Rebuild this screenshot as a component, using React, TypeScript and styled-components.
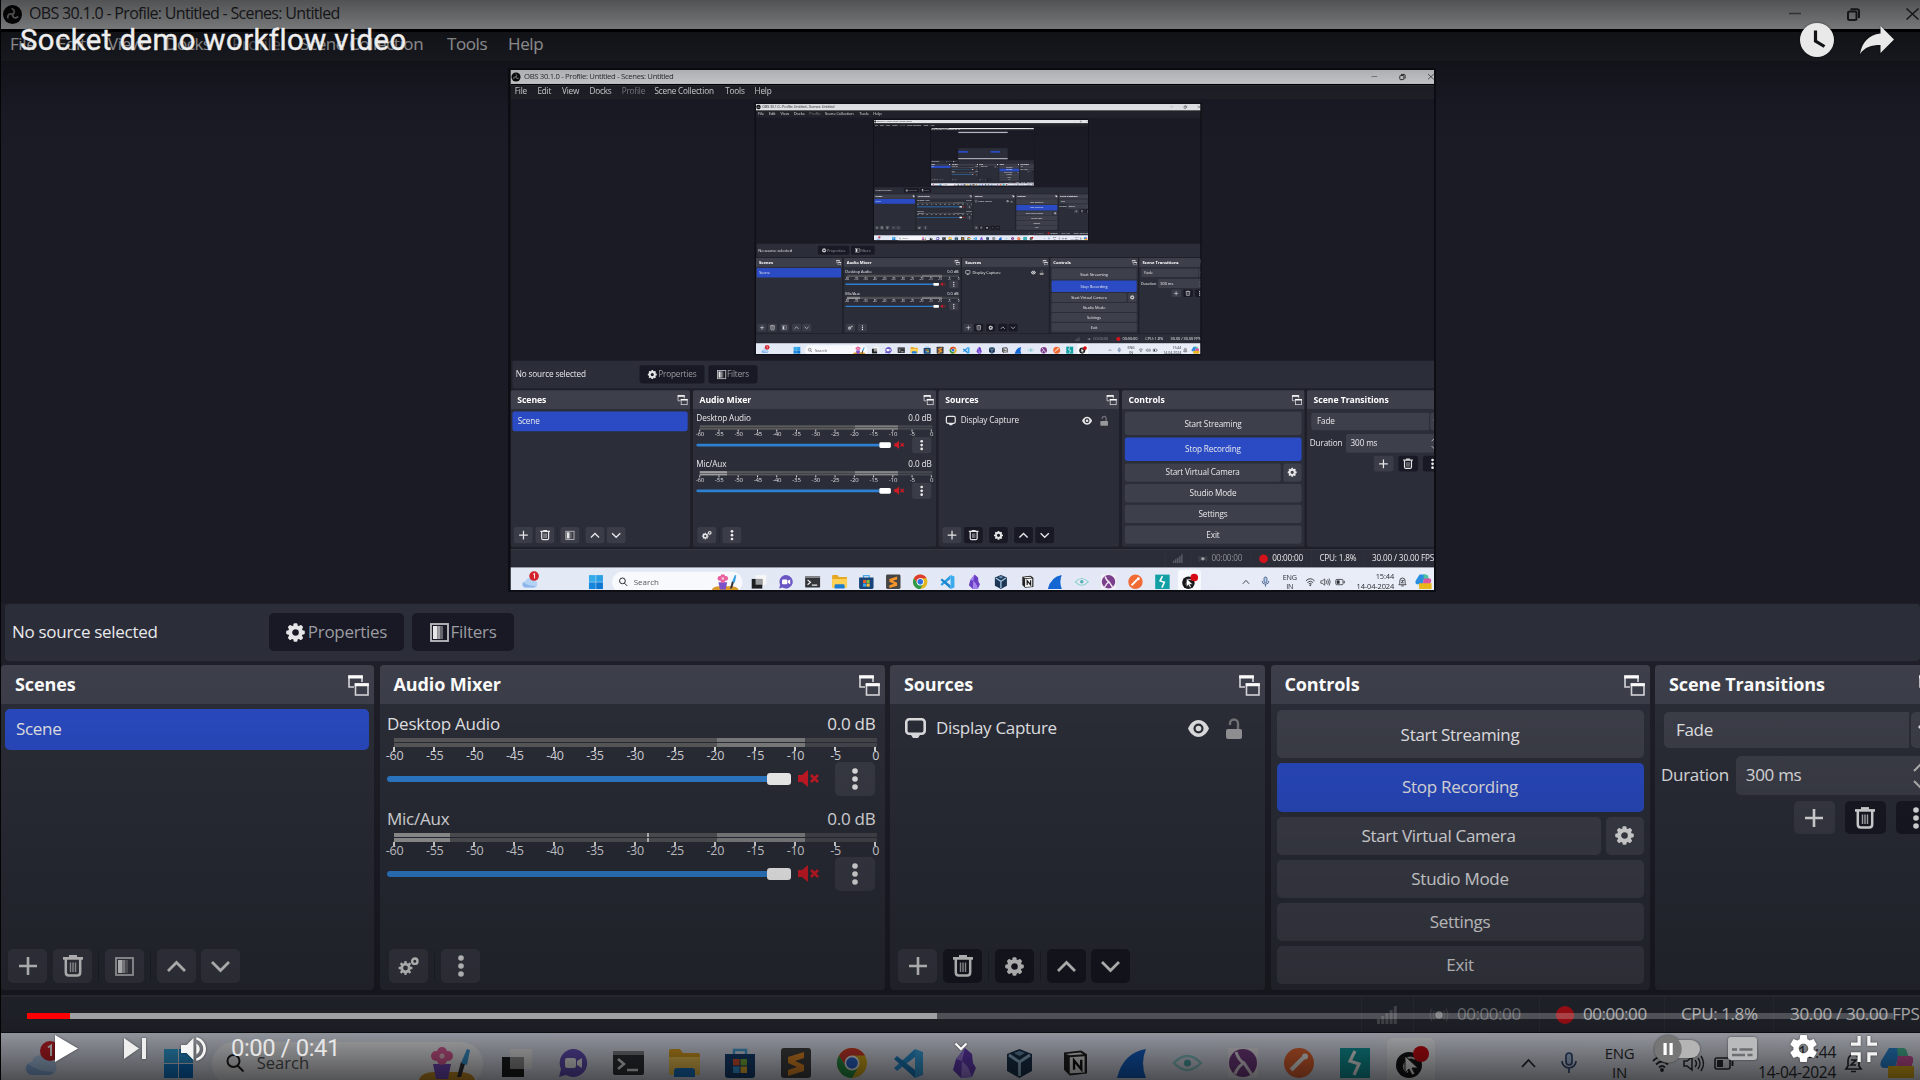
import React from "react";
import styled, { createGlobalStyle } from "styled-components";

const SCALE = 0.4815;
const TEXT_DEPTH = 4;

const GlobalStyle = createGlobalStyle`
  html, body { margin: 0; padding: 0; background: #000; }
  body { width: 1920px; height: 1080px; overflow: hidden; }
  * { box-sizing: border-box; }
  svg { display: block; flex: none; overflow: visible; }
`;

const ui = `"Open Sans", "Noto Sans", sans-serif`;

/* ---------- desktop frame ---------- */

const Desktop = styled.div`
  width: 1920px;
  height: 1080px;
  overflow: hidden;
  display: flex;
  flex-direction: column;
  background: #1e1f28;
  border-left: 1px solid #050507;
  font-family: ${ui};
  color: #e9e9ec;
`;

const TitleBar = styled.div`
  flex: none;
  height: 32px;
  display: flex;
  align-items: center;
  padding: 0 1px 1px 2px;
  background: #eff1f4;
  border-bottom: 3px solid #000;
`;

const Text = styled.span<{ $size?: number; $color?: string; $weight?: number; $ls?: number; $font?: string }>`
  font-family: ${(p) => p.$font ?? ui};
  font-size: ${(p) => p.$size ?? 17}px;
  font-weight: ${(p) => p.$weight ?? 400};
  color: ${(p) => p.$color ?? "#e9e9ec"};
  letter-spacing: ${(p) => p.$ls ?? -0.3}px;
  line-height: 1.2;
  white-space: nowrap;
`;

const TitleText = styled(Text)`
  margin-left: 7px;
`;

const WindowButtons = styled.div`
  margin-left: auto;
  display: flex;
  align-items: center;
  gap: 46px;
`;

const MenuBar = styled.div`
  flex: none;
  height: 29px;
  display: grid;
  grid-template-columns: 47px 51px 57px 67px 68px 147px 61px 60px;
  align-items: center;
  padding: 0 0 4px 9px;
  background: #22242c;
`;

const PreviewArea = styled.div`
  flex: none;
  height: 542px;
  padding: 9px 0 0 509px;
  background: #1b1b26;
`;

const PreviewFrame = styled.div`
  width: ${1920 * SCALE}px;
  height: ${1080 * SCALE}px;
  overflow: hidden;
  box-shadow: 0 0 0 2px #0d0d14;
`;

const Scaler = styled.div`
  width: 1920px;
  height: 1080px;
  transform: scale(${SCALE});
  transform-origin: 0 0;
`;

/* ---------- source toolbar ---------- */

const SourceBar = styled.div`
  flex: none;
  height: 57px;
  margin: 1px 0 4px 4px;
  padding: 0 0 1px 7px;
  display: flex;
  align-items: center;
  border-radius: 4px;
  background: #2b2d38;
`;

const SourceName = styled.div`
  width: 257px;
`;

const SourceButton = styled.div<{ $width: number; $gap: number }>`
  width: ${(p) => p.$width}px;
  height: 38px;
  margin-right: 8px;
  display: flex;
  align-items: center;
  justify-content: center;
  gap: ${(p) => p.$gap}px;
  border-radius: 5px;
  background: #181924;
`;

/* ---------- docks ---------- */

const Docks = styled.div`
  flex: none;
  height: 325px;
  display: flex;
  gap: 5.5px;
`;

const Dock = styled.div<{ $width: number }>`
  flex: none;
  width: ${(p) => p.$width}px;
  display: flex;
  flex-direction: column;
  border-radius: 4px;
  background: #2b2e38;
  overflow: hidden;
`;

const DockHeader = styled.div`
  flex: none;
  height: 39px;
  padding: 1px 5px 0 14px;
  display: flex;
  align-items: center;
  justify-content: space-between;
  background: #3d3f4b;
`;

const DockBody = styled.div<{ $pad: string }>`
  flex: 1;
  display: flex;
  flex-direction: column;
  padding: ${(p) => p.$pad};
`;

const SceneRow = styled.div`
  height: 41px;
  padding: 0 0 1px 11px;
  display: flex;
  align-items: center;
  border-radius: 5px;
  background: #2a4bc4;
`;

const DockFooter = styled.div`
  margin-top: auto;
  display: flex;
  align-items: center;
`;

const Separator = styled.div`
  width: 1px;
  height: 30px;
  margin: 0 6px;
  background: #22242d;
`;

const ToolButton = styled.div<{ $dark?: boolean; $mr?: number; $w?: number; $h?: number }>`
  flex: none;
  width: ${(p) => p.$w ?? 39}px;
  height: ${(p) => p.$h ?? 34}px;
  margin-right: ${(p) => p.$mr ?? 0}px;
  display: flex;
  align-items: center;
  justify-content: center;
  border-radius: 5px;
  background: ${(p) => (p.$dark ? "#181924" : "#3a3c47")};
`;

/* ---------- audio mixer ---------- */

const Channel = styled.div`
  height: 95px;
  display: flex;
  flex-direction: column;
`;

const ChannelHead = styled.div`
  height: 28px;
  padding: 2px 1px 0 0;
  display: flex;
  align-items: center;
  justify-content: space-between;
`;

const Meter = styled.div`
  height: 9px;
  margin: 1px 0 0 7px;
  width: 483px;
  display: flex;
  flex-direction: column;
  gap: 1px;
`;

const MeterStrip = styled.div<{ $live?: boolean }>`
  height: 4px;
  background: ${(p) =>
    p.$live
      ? "linear-gradient(90deg,#9d9d9d 0 56px,#55565a 56px 253px,#c4c4c4 253px 255px,#55565a 255px 323px,#858688 323px 411px,#46484f 411px)"
      : "linear-gradient(90deg,#5b5b5c 0 323px,#7f8080 323px 411px,#46484f 411px)"};
`;

const Scale = styled.div`
  height: 24px;
  margin-left: -13px;
  display: grid;
  grid-template-columns: repeat(13, 40.1px);
`;

const Tick = styled.div`
  display: flex;
  flex-direction: column;
  align-items: center;
  color: #dedee0;
  font-size: 12.5px;
  line-height: 9px;
  letter-spacing: -0.3px;
  text-indent: 1px;
  &::before {
    content: "";
    width: 2px;
    height: 4px;
    background: #dedee0;
  }
`;

const VolumeRow = styled.div`
  height: 33px;
  margin-top: -9px;
  display: flex;
  align-items: center;
`;

const Track = styled.div`
  width: 380px;
  height: 6px;
  border-radius: 3px 0 0 3px;
  background: #2f80d2;
`;

const Handle = styled.div`
  width: 24px;
  height: 12px;
  margin-right: 7px;
  border-radius: 3px;
  background: #fff;
`;

/* ---------- sources / controls / transitions ---------- */

const SourceRow = styled.div`
  display: flex;
  align-items: center;
  height: 34px;
`;

const ControlRow = styled.div`
  display: flex;
  gap: 5px;
  margin-bottom: 5.3px;
`;

const ControlButton = styled.div<{ $h: number; $w?: number; $active?: boolean }>`
  width: ${(p) => p.$w ?? 367}px;
  height: ${(p) => p.$h}px;
  padding-top: ${(p) => (p.$h === 48 ? 2 : 0)}px;
  display: flex;
  align-items: center;
  justify-content: center;
  border-radius: 5px;
  background: ${(p) => (p.$active ? "#2a4bc4" : "#3d3f4a")};
`;

const Combo = styled.div`
  display: flex;
  gap: 2px;
  height: 36px;
  margin-left: 9px;
`;

const ComboPart = styled.div<{ $w: number; $pl: number }>`
  width: ${(p) => p.$w}px;
  padding-left: ${(p) => p.$pl}px;
  display: flex;
  align-items: center;
  border-radius: 5px 0 0 5px;
  background: #3d3f4a;
`;

const DurationRow = styled.div`
  display: flex;
  align-items: center;
  height: 39px;
  margin-top: 8px;
  padding-left: 6px;
`;

const SpinBox = styled.div`
  width: 195px;
  height: 39px;
  margin-left: 7px;
  padding-left: 10px;
  display: flex;
  align-items: center;
  border-radius: 5px;
  background: #3d3f4a;
`;

const TransitionTools = styled.div`
  display: flex;
  gap: 10.5px;
  margin: 6px 0 0 139px;
`;

/* ---------- status bar ---------- */

const StatusBar = styled.div`
  flex: none;
  height: 38px;
  margin-top: 5px;
  display: flex;
  align-items: center;
  justify-content: flex-end;
  background: #2b2e38;
  border-top: 2px solid #343743;
  border-bottom: 1px solid #15161c;
`;

const StatusCell = styled.div<{ $w: number; $pl: number; $gap?: number }>`
  flex: none;
  width: ${(p) => p.$w}px;
  height: 100%;
  padding-left: ${(p) => p.$pl}px;
  display: flex;
  align-items: center;
  gap: ${(p) => p.$gap ?? 0}px;
  border-left: 1px solid #353743;
`;

const RecordDot = styled.div`
  width: 18px;
  height: 18px;
  border-radius: 50%;
  background: #d3121c;
`;

/* ---------- taskbar ---------- */

const Taskbar = styled.div`
  flex: none;
  height: 48px;
  display: flex;
  align-items: center;
  background: linear-gradient(90deg, #e3e9f5, #e4e8f6 60%, #e9eef8);
`;

const WeatherSlot = styled.div`
  width: 165px;
  padding: 4px 0 0 24px;
`;

const SearchPill = styled.div`
  width: 275px;
  height: 44px;
  margin: 14px 6px 0 19px;
  padding: 0 8px 2px 14px;
  display: flex;
  align-items: center;
  border-radius: 22px;
  background: #f8f9fc;
`;

const SearchLabel = styled(Text)`
  margin: 0 auto 0 13px;
`;

const AppStrip = styled.div`
  display: grid;
  grid-template-columns: repeat(17, 55.9px);
  height: 48px;
`;

const AppSlot = styled.div<{ $active?: boolean }>`
  display: flex;
  align-items: center;
  justify-content: center;
  margin: ${(p) => (p.$active ? "5px 4px 0" : "0")};
  padding-top: ${(p) => (p.$active ? "6px" : "12px")};
  border-radius: 6px 6px 0 0;
  background: ${(p) => (p.$active ? "#f7f9fd" : "transparent")};
`;

const Tray = styled.div`
  flex: 1;
  height: 48px;
  padding-left: 82px;
  display: grid;
  grid-template-columns: 40px 26px 65px 31px 31px 20px 102px 8px 36px 40px;
  align-items: center;
  & > svg { margin-top: 12px; }
`;

const TrayStack = styled.div<{ $align: string }>`
  display: flex;
  flex-direction: column;
  align-items: ${(p) => p.$align};
  gap: 1px;
  padding-top: 10px;
`;

/* ---------- far-away copies, reduced to their blocks of colour ---------- */

const FarDesktop = styled.div`
  width: 1920px;
  height: 1080px;
  display: flex;
  flex-direction: column;
  justify-content: space-between;
  background: #1b1b26;
  border-top: 60px solid #b9bbc6;
  border-bottom: 50px solid #dfe3ee;
`;

const FarDocks = styled.div`
  flex: none;
  height: 390px;
  margin-top: auto;
  display: flex;
  justify-content: space-between;
  padding: 110px 300px 0 0;
  background: #2b2e38;
`;

const FarBlock = styled.div<{ $w: number }>`
  width: ${(p) => p.$w}px;
  height: 70px;
  background: #2a4bc4;
`;

/* ---------- player overlay ---------- */

const Player = styled.div`
  position: relative;
  width: 1920px;
  height: 1080px;
  overflow: hidden;
`;

const TopShade = styled.div`
  position: absolute;
  inset: 0 0 auto 0;
  height: 150px;
  background: linear-gradient(rgba(0,0,0,.66) 0, rgba(0,0,0,.51) 28px, rgba(0,0,0,.24) 76px, rgba(0,0,0,.08) 108px, transparent);
`;

const BottomShade = styled.div`
  position: absolute;
  inset: auto 0 0 0;
  height: 420px;
  background: linear-gradient(transparent 0, rgba(0,0,0,.1) 110px, rgba(0,0,0,.25) 290px, rgba(0,0,0,.31) 355px, rgba(0,0,0,.38) 375px, rgba(0,0,0,.66) 420px);
`;

const Overlay = styled.div`
  position: absolute;
  inset: 0;
  display: flex;
  flex-direction: column;
  justify-content: space-between;
`;

const TopChrome = styled.div`
  height: 80px;
  padding: 0 26px 0 20px;
  display: flex;
  align-items: center;
  & > svg { filter: drop-shadow(0 0 1px rgba(0,0,0,.5)); }
`;

const VideoTitle = styled.div`
  flex: 1;
  font: 400 29.3px/34px Roboto, sans-serif;
  letter-spacing: 0.45px;
  color: #eee;
  -webkit-text-stroke: 0.4px #eee;
  text-shadow: 0 0 2px rgba(0,0,0,.5);
`;

const BottomChrome = styled.div`
  height: 67px;
`;

const Progress = styled.div`
  height: 6px;
  margin: 0 27px;
  display: flex;
  background: rgba(255,255,255,.22);
`;

const Played = styled.div`
  width: 43px;
  background: #f00;
`;

const Buffered = styled.div`
  width: 867px;
  background: rgba(255,255,255,.46);
`;

const Controls = styled.div`
  height: 61px;
  padding: 0 43px 2px 55px;
  display: grid;
  grid-template-columns: 69px 57px 50px 724px 1fr auto;
  align-items: center;
  & svg { filter: drop-shadow(0 0 1px rgba(0,0,0,.5)); }
`;

const Time = styled.div`
  font: 400 23.8px/28px Roboto, sans-serif;
  letter-spacing: -0.4px;
  color: #e6e6e6;
  margin-top: -2px;
`;

const ExpandHint = styled.div`
  padding-bottom: 5px;
`;

const RightControls = styled.div`
  grid-column: 6;
  display: flex;
  align-items: center;
`;

const Gap = styled.div<{ $w: number }>`
  width: ${(p) => p.$w}px;
`;

/* ---------- icons ---------- */

const GEAR =
  "m 23.94,18.78 c .03,-0.25 .05,-0.51 .05,-0.78 0,-0.27 -0.02,-0.52 -0.05,-0.78 l 1.68,-1.32 c .15,-0.12 .19,-0.33 .09,-0.51 l -1.6,-2.76 c -0.09,-0.17 -0.31,-0.24 -0.48,-0.17 l -1.99,.8 c -0.41,-0.32 -0.86,-0.58 -1.35,-0.78 l -0.30,-2.12 c -0.02,-0.19 -0.19,-0.33 -0.39,-0.33 l -3.2,0 c -0.2,0 -0.36,.14 -0.39,.33 l -0.30,2.12 c -0.48,.2 -0.93,.47 -1.35,.78 l -1.99,-0.8 c -0.18,-0.07 -0.39,0 -0.48,.17 l -1.6,2.76 c -0.10,.17 -0.05,.39 .09,.51 l 1.68,1.32 c -0.03,.25 -0.05,.52 -0.05,.78 0,.26 .02,.52 .05,.78 l -1.68,1.32 c -0.15,.12 -0.19,.33 -0.09,.51 l 1.6,2.76 c .09,.17 .31,.24 .48,.17 l 1.99,-0.8 c .41,.32 .86,.58 1.35,.78 l .30,2.12 c .02,.19 .19,.33 .39,.33 l 3.2,0 c .2,0 .36,-0.14 .39,-0.33 l .30,-2.12 c .48,-0.2 .93,-0.47 1.35,-0.78 l 1.99,.8 c .18,.07 .39,0 .48,-0.17 l 1.6,-2.76 c .09,-0.17 .05,-0.39 -0.09,-0.51 l -1.68,-1.32 0,0 z m -5.94,2.01 c -1.54,0 -2.8,-1.25 -2.8,-2.8 0,-1.54 1.25,-2.8 2.8,-2.8 1.54,0 2.8,1.25 2.8,2.8 0,1.54 -1.25,2.8 -2.8,2.8 l 0,0 z";

const IC = "#e6e6e8";

const ObsLogo = ({ size = 19 }: { size?: number }) => (
  <svg width={size} height={size} viewBox="0 0 20 20">
    <circle cx="10" cy="10" r="10" fill="#0b0b0c" />
    <g fill="none" stroke="#b9bbbd" strokeWidth="1.8" strokeLinecap="round">
      {[0, 120, 240].map((a) => (
        <path key={a} d="M10 9.4C12.6 8.8 12.8 5.6 9.6 4" transform={`rotate(${a} 10 10)`} />
      ))}
    </g>
  </svg>
);

const Cog = ({ size = 19, color = IC }: { size?: number; color?: string }) => (
  <svg width={size} height={size} viewBox="0 0 20 20">
    <circle cx="10" cy="10" r="5.6" fill="none" stroke={color} strokeWidth="4.2" />
    {[0, 45, 90, 135, 180, 225, 270, 315].map((a) => (
      <rect key={a} x="7.9" y="0.2" width="4.2" height="4" rx="1.2" fill={color} transform={`rotate(${a} 10 10)`} />
    ))}
  </svg>
);

const Cogs = () => (
  <svg width="21" height="18" viewBox="0 0 21 18">
    <circle cx="7.5" cy="11" r="3.8" fill="none" stroke={IC} strokeWidth="2.8" />
    {[0, 45, 90, 135, 180, 225, 270, 315].map((a) => (
      <rect key={a} x="6.3" y="4.1" width="2.4" height="3" fill={IC} transform={`rotate(${a} 7.5 11)`} />
    ))}
    <circle cx="16.8" cy="4.2" r="2.7" fill="none" stroke={IC} strokeWidth="2.4" />
  </svg>
);

const FilterIcon = ({ size = 19 }: { size?: number }) => (
  <svg width={size} height={size} viewBox="0 0 19 19">
    <rect x="1" y="1" width="17" height="17" fill="none" stroke="#bdbdc0" strokeWidth="1.8" />
    <rect x="3" y="3" width="4.5" height="13" fill={IC} />
    <rect x="7.5" y="3" width="2.5" height="13" fill="#a0a0a6" />
    <rect x="10" y="3" width="3" height="13" fill="#65666e" />
  </svg>
);

const FloatIcon = () => (
  <svg width="21" height="21" viewBox="0 0 21 21" fill="none" stroke="#d9d9dc" strokeWidth="1.6">
    <path d="M6 12H1V1h13v6" />
    <path d="M.2 2h14.600" strokeWidth="3" stroke="#fff" />
    <rect x="7.5" y="9" width="12.5" height="11" />
    <path d="M6.700 9.800h14.100" strokeWidth="3" stroke="#fff" />
  </svg>
);

const Plus = () => (
  <svg width="18" height="18" viewBox="0 0 18 18" stroke={IC} strokeWidth="2.6">
    <path d="M9 0v18M0 9h18" />
  </svg>
);

const Trash = () => (
  <svg width="20" height="22" viewBox="0 0 20 22" fill="none" stroke={IC}>
    <path d="M0 3.4h20" strokeWidth="2.6" />
    <path d="M6 1.2h8" strokeWidth="2.2" />
    <path d="M2.8 4v13.5q0 3 3 3h8.4q3 0 3-3V4" strokeWidth="2.5" />
    <path d="M7.5 7.5v9.5M10 7.5v9.5M12.5 7.5v9.5" strokeWidth="1.4" stroke="#b5b5ba" />
  </svg>
);

const Chevron = ({ up }: { up?: boolean }) => (
  <svg width="19" height="11" viewBox="0 0 19 11" fill="none" stroke={IC} strokeWidth="2.8">
    <path d={up ? "M1 10l8.5-8.5L18 10" : "M1 1l8.5 8.5L18 1"} />
  </svg>
);

const Dots = () => (
  <svg width="6" height="22" viewBox="0 0 6 22" fill="#ececee">
    <circle cx="3" cy="3" r="2.8" />
    <circle cx="3" cy="11" r="2.8" />
    <circle cx="3" cy="19" r="2.8" />
  </svg>
);

const Muted = () => (
  <svg width="21" height="17" viewBox="0 0 21 17">
    <path d="M0 5h4l6-5v17l-6-5H0z" fill="#cf1b27" />
    <path d="M13 5l7 7M20 5l-7 7" stroke="#cf1b27" strokeWidth="2.6" />
  </svg>
);

const Monitor = () => (
  <svg width="21" height="20" viewBox="0 0 21 20">
    <rect x="1.3" y="1.3" width="18.4" height="14.4" rx="3" fill="none" stroke={IC} strokeWidth="2.6" />
    <path d="M6 17h9l-2 3H8z" fill={IC} />
  </svg>
);

const Eye = () => (
  <svg width="21" height="17" viewBox="0 0 21 17">
    <path d="M0 8.5C5-2.8 16-2.8 21 8.5 16 19.8 5 19.8 0 8.5z" fill={IC} />
    <circle cx="10.5" cy="8.5" r="5" fill="#2b2e38" />
    <circle cx="10.5" cy="8.5" r="2.8" fill={IC} />
  </svg>
);

const Lock = () => (
  <svg width="16" height="21" viewBox="0 0 16 21">
    <rect x="0" y="11" width="16" height="10" rx="2" fill="#98989a" />
    <path d="M12 11V5.5a4 4 0 0 0-8 0V7" fill="none" stroke="#77777b" strokeWidth="2.4" />
  </svg>
);

const Minimize = () => (
  <svg width="12" height="12" viewBox="0 0 12 12">
    <path d="M0 5.5h12" stroke="#777" strokeWidth="1.5" />
  </svg>
);

const Restore = () => (
  <svg width="13" height="13" viewBox="0 0 13 13" fill="none" stroke="#333" strokeWidth="2">
    <rect x="1" y="3.5" width="8.5" height="8.5" rx="1.5" />
    <path d="M3.5 1.2H10q2 0 2 2V10" />
  </svg>
);

const Close = () => (
  <svg width="13" height="12" viewBox="0 0 13 12" stroke="#333" strokeWidth="1.5">
    <path d="M.5.5l12 11M12.5.5l-12 11" />
  </svg>
);

const Signal = () => (
  <svg width="20" height="18" viewBox="0 0 20 18" fill="#5c5e67">
    <rect x="0" y="13" width="3" height="5" />
    <rect x="4.2" y="10" width="3" height="8" />
    <rect x="8.4" y="7" width="3" height="11" />
    <rect x="12.6" y="4" width="3" height="14" />
    <rect x="16.8" y="0" width="3" height="18" />
  </svg>
);

const Broadcast = () => (
  <svg width="18" height="14" viewBox="0 0 18 14" fill="none" stroke="#4a4c56" strokeWidth="1.4">
    <circle cx="9" cy="7" r="3.8" fill="#9c9da2" stroke="none" />
    <path d="M4.5 2.5q-2.5 4.500 0 9M1.800.800q-3 6 0 12.400M13.500 2.500q2.500 4.500 0 9M16.200.800q3 6 0 12.400" />
  </svg>
);

/* taskbar icons */

const Weather = () => (
  <svg width="34" height="36" viewBox="0 0 34 36">
    <path d="M7 34a6.500 6.500 0 0 1 0-13 8.500 8.500 0 0 1 16-2 7.500 7.500 0 0 1 2 15z" fill="#b4d2f5" />
    <path d="M7 34a6.500 6.500 0 0 1-4-11q8 7 26 8l-4 3z" fill="#8db7ea" />
    <circle cx="25" cy="10" r="10" fill="#d3222a" />
    <path d="M23 6.500l3-2V15" fill="none" stroke="#fff" strokeWidth="2" />
  </svg>
);

const WinLogo = () => (
  <svg width="29" height="29" viewBox="0 0 29 29" fill="#1a8fdf">
    <rect width="14" height="14" fill="#35abea" />
    <rect x="15" width="14" height="14" fill="#2a9fe6" />
    <rect y="15" width="14" height="14" fill="#1587dc" />
    <rect x="15" y="15" width="14" height="14" fill="#0c76d2" />
  </svg>
);

const SearchGlass = () => (
  <svg width="18" height="18" viewBox="0 0 18 18" fill="none" stroke="#222" strokeWidth="2">
    <circle cx="7.500" cy="7" r="6" />
    <path d="M11.500 11.500l6 6" />
  </svg>
);

const Flower = () => (
  <svg width="56" height="34" viewBox="0 0 56 34">
    <path d="M0 34q2-8 16-8h24q14 0 16 8z" fill="#d99a2b" />
    <path d="M14 18h18l-3 15H17z" fill="#7b50c8" />
    <path d="M23 18V8" stroke="#3c9a4b" strokeWidth="3" />
    <g fill="#e8609f">
      <circle cx="17" cy="10" r="5" />
      <circle cx="23" cy="6" r="5" />
      <circle cx="29" cy="10" r="5" />
      <circle cx="23" cy="14" r="5" />
    </g>
    <circle cx="23" cy="10" r="2.600" fill="#f6c9d8" />
    <path d="M38 31l4-15 4 2-4 13z" fill="#33343a" />
    <path d="M42 17l6-14 3 1-3 15z" fill="#3aa0e0" />
  </svg>
);

type IconFn = () => React.ReactElement;

const TaskView: IconFn = () => (
  <svg width="30" height="28" viewBox="0 0 30 28">
    <rect x="8" y="0" width="22" height="20" fill="#f7f7f7" />
    <rect x="0" y="8" width="22" height="20" fill="#1d1e20" />
    <rect x="8" y="8" width="14" height="12" fill="#9b9c9e" />
  </svg>
);

const Chat: IconFn = () => (
  <svg width="30" height="30" viewBox="0 0 30 30">
    <path d="M15 1a14 14 0 1 1-7 26L1 29l2-8A14 14 0 0 1 15 1z" fill="#6a55c4" />
    <rect x="7" y="10" width="11" height="10" rx="2" fill="#fff" />
    <path d="M19 13l5-3v10l-5-3z" fill="#fff" />
  </svg>
);

const Terminal: IconFn = () => (
  <svg width="31" height="24" viewBox="0 0 31 24">
    <rect width="31" height="24" rx="2" fill="#33353a" />
    <path d="M0 0h31v4H0z" fill="#85878c" />
    <path d="M5 8l6 5-6 5M14 19h11" stroke="#f2f2f2" strokeWidth="2.500" fill="none" />
  </svg>
);

const Folder: IconFn = () => (
  <svg width="31" height="28" viewBox="0 0 31 28">
    <path d="M0 2q0-2 2-2h9l3 4h15q2 0 2 2v20H0z" fill="#e6a823" />
    <path d="M0 8h31v18H0z" fill="#ffd257" />
    <path d="M5 28v-6q0-3 3-3h15q3 0 3 3v6z" fill="#1c7cd0" />
  </svg>
);

const Store: IconFn = () => (
  <svg width="30" height="30" viewBox="0 0 30 30">
    <path d="M9 7V2h12v5" fill="none" stroke="#4aa9e8" strokeWidth="2.500" />
    <path d="M0 6h30v21q0 3-3 3H3q-3 0-3-3z" fill="#17447a" />
    <rect x="8" y="11" width="6.500" height="6.500" fill="#ee5a36" />
    <rect x="15.500" y="11" width="6.500" height="6.500" fill="#85bd3c" />
    <rect x="8" y="18.500" width="6.500" height="6.500" fill="#38a6ea" />
    <rect x="15.500" y="18.500" width="6.500" height="6.500" fill="#f8bd35" />
  </svg>
);

const Sublime: IconFn = () => (
  <svg width="30" height="30" viewBox="0 0 30 30">
    <rect width="30" height="30" rx="3" fill="#454545" />
    <path d="M23 4v6l-9 3 9 4v6L7 28v-6l9-3-9-4V9z" fill="#f5942a" />
  </svg>
);

const Chrome: IconFn = () => (
  <svg width="30" height="30" viewBox="0 0 30 30">
    <circle cx="15" cy="15" r="15" fill="#e3b51f" />
    <path d="M2 7.500A15 15 0 0 1 28 7.500H15L9 18z" fill="#dd3d31" />
    <path d="M2 7.500A15 15 0 0 0 15 30l6.500-11.500H9z" fill="#2a9a4b" />
    <circle cx="15" cy="15" r="7.500" fill="#fff" />
    <circle cx="15" cy="15" r="5.800" fill="#2f6fe0" />
  </svg>
);

const VsCode: IconFn = () => (
  <svg width="30" height="29" viewBox="0 0 30 29">
    <path d="M22 0v8L4 22l-3-3z" fill="#2a9ee6" />
    <path d="M1 10l3-3 18 14v8z" fill="#1b86cf" />
    <path d="M22 0l8 3v23l-8 3z" fill="#3aacee" />
  </svg>
);

const Obsidian: IconFn = () => (
  <svg width="24" height="30" viewBox="0 0 24 30">
    <path d="M13 0l7 6 1 9 3 5-4 9-11 1-8-8 3-11z" fill="#6b3fc4" />
    <path d="M13 0l-3 13-6-2zM10 13l6 6 4 10-11 1z" fill="#a583ee" />
  </svg>
);

const VirtualBox: IconFn = () => (
  <svg width="25" height="29" viewBox="0 0 25 29">
    <path d="M12.500 0L25 5v17l-12.500 7L0 22V5z" fill="#1b3552" />
    <path d="M2 6l10.500 7L23 6M12.500 13v14" stroke="#9cc0dd" strokeWidth="2.800" fill="none" />
    <path d="M7 4l5.500-2L18 4l-5.500 3z" fill="#6d93b5" />
  </svg>
);

const Notion: IconFn = () => (
  <svg width="23" height="26" viewBox="0 0 24 26">
    <path d="M0 2l18-2 6 4v20L6 26l-6-6z" fill="#222" />
    <path d="M2 3.500l15-1.500 3 2-14 1z" fill="#f5f5f5" />
    <path d="M6 7l15.500-1v17L6 24z" fill="#f5f5f5" />
    <path d="M10.500 20V10.500l7.500 9V9.500" stroke="#111" strokeWidth="2.500" fill="none" />
  </svg>
);

const Wireshark: IconFn = () => (
  <svg width="30" height="29" viewBox="0 0 30 29">
    <path d="M0 29Q6 4 29 0q-6 14 0 29z" fill="#1466d2" />
  </svg>
);

const TealEye: IconFn = () => (
  <svg width="29" height="16" viewBox="0 0 29 16">
    <path d="M1 8q13-14 27 0-14 14-27 0z" fill="none" stroke="#8ed0d3" strokeWidth="2.400" />
    <circle cx="14.500" cy="8" r="3.600" fill="#55b0b6" />
  </svg>
);

const PurpleX: IconFn = () => (
  <svg width="30" height="30" viewBox="0 0 30 30">
    <rect width="30" height="30" fill="#f5f2f7" />
    <circle cx="15" cy="15" r="14" fill="#7b3f8c" />
    <path d="M8 4q3 9 8 11l8 12M16 15q-6 3-9 11" stroke="#f0e8f3" strokeWidth="3" fill="none" />
  </svg>
);

const Postman: IconFn = () => (
  <svg width="30" height="30" viewBox="0 0 30 30">
    <circle cx="15" cy="15" r="15" fill="#f26b35" />
    <path d="M7 22l12-12" stroke="#fff" strokeWidth="4" />
    <circle cx="21" cy="8.500" r="3" fill="#fff" />
  </svg>
);

const CyanBolt: IconFn = () => (
  <svg width="30" height="30" viewBox="0 0 30 30">
    <rect width="30" height="30" fill="#12a0a5" />
    <path d="M15 3l-5 10 9 3-5 11" stroke="#fff" strokeWidth="3.200" fill="none" />
  </svg>
);

const ObsTask: IconFn = () => (
  <svg width="33" height="33" viewBox="0 0 33 33">
    <circle cx="14" cy="19" r="13" fill="#151518" />
    <path d="M10 17q-3 6 3 9M11 13q4-3 9 0" stroke="#d5d5d8" strokeWidth="2" fill="none" />
    <circle cx="26" cy="8" r="8" fill="#d60b14" />
    <path d="M10 10v17l4-4 3 6 3-1-3-6h6z" fill="#fff" stroke="#222" strokeWidth="1" />
  </svg>
);

const APPS: IconFn[] = [
  TaskView, Chat, Terminal, Folder, Store, Sublime, Chrome, VsCode, Obsidian,
  VirtualBox, Notion, Wireshark, TealEye, PurpleX, Postman, CyanBolt, ObsTask,
];

const dark = "#2c2d31";

const TrayIcons = {
  up: (
    <svg width="15" height="9" viewBox="0 0 15 9" fill="none" stroke={dark} strokeWidth="1.800">
      <path d="M1 8l6.500-7L14 8" />
    </svg>
  ),
  mic: (
    <svg width="16" height="22" viewBox="0 0 16 22" fill="none" stroke="#35507f" strokeWidth="1.700">
      <rect x="5" y="1" width="6" height="12" rx="3" fill="#b7cdec" />
      <path d="M1 9a7 7 0 0 0 14 0M8 16v5" />
    </svg>
  ),
  wifi: (
    <svg width="20" height="16" viewBox="0 0 20 16" fill="none" stroke={dark} strokeWidth="1.800">
      <path d="M1 6q9-9 18 0M4 9.500q6-6 12 0M7 12.500q3-3 6 0" />
      <circle cx="10" cy="15" r="1" fill={dark} />
    </svg>
  ),
  speaker: (
    <svg width="21" height="17" viewBox="0 0 21 17" fill="none" stroke={dark} strokeWidth="1.500">
      <path d="M1 6h3l5-4v13l-5-4H1zM12 5q3 3.500 0 7M15 3q4 5.500 0 11M18 1q5 7.500 0 15" />
    </svg>
  ),
  battery: (
    <svg width="20" height="13" viewBox="0 0 20 13" fill="none" stroke={dark} strokeWidth="1.600">
      <rect x="1" y="1" width="15" height="11" rx="2" />
      <rect x="3" y="3" width="6" height="7" fill={dark} stroke="none" />
      <path d="M18.500 4v5" strokeWidth="2" />
    </svg>
  ),
  bell: (
    <svg width="19" height="20" viewBox="0 0 19 20" fill="none" stroke={dark} strokeWidth="1.700">
      <path d="M2 16h15l-2-3V8q0-6-5.500-6T4 8v5zM7 18.500h5" />
      <path d="M7 7h5l-5 5h5" />
    </svg>
  ),
  copilot: (
    <svg width="34" height="30" viewBox="0 0 34 30">
      <path d="M9 0h12l-6 20H4q-5 0-3-7z" fill="#2b8de0" />
      <path d="M17 0h6q3 0 4 4l2 6H18z" fill="#4fc3a0" />
      <path d="M18 8h12q4 0 3 6l-5 14H14z" fill="#d855a5" />
      <rect x="8" y="18" width="26" height="12" fill="#e9b61c" />
    </svg>
  ),
};

/* ---------- composite parts ---------- */

const MENU = ["File", "Edit", "View", "Docks", "Profile", "Scene Collection", "Tools", "Help"];
const LEVELS = ["-60", "-55", "-50", "-45", "-40", "-35", "-30", "-25", "-20", "-15", "-10", "-5", "0"];

const DockTitle = ({ children }: { children: string }) => (
  <DockHeader>
    <Text $weight={700} $size={18} $color="#fff" $ls={-0.12}>{children}</Text>
    <FloatIcon />
  </DockHeader>
);

const MixerChannel = ({ name, live }: { name: string; live?: boolean }) => (
  <Channel>
    <ChannelHead>
      <Text $ls={-0.25}>{name}</Text>
      <Text $ls={-0.25}>0.0 dB</Text>
    </ChannelHead>
    <Meter>
      <MeterStrip $live={live} />
      <MeterStrip $live={live} />
    </Meter>
    <Scale>
      {LEVELS.map((l) => (
        <Tick key={l}>{l}</Tick>
      ))}
    </Scale>
    <VolumeRow>
      <Track />
      <Handle />
      <Muted />
      <Gap $w={16} />
      <ToolButton $w={40}>
        <Dots />
      </ToolButton>
    </VolumeRow>
  </Channel>
);

const FarCopy = ({ depth }: { depth: number }) => (
  <FarDesktop>
    <FarDocks>
      <FarBlock $w={370} />
      <FarBlock $w={367} />
    </FarDocks>
  </FarDesktop>
);

const ObsDesktop = ({ depth }: { depth: number }) => (
  <Desktop>
    <TitleBar>
      <ObsLogo />
      <TitleText $size={16} $color="#33353a" $ls={-0.68}>
        OBS 30.1.0 - Profile: Untitled - Scenes: Untitled
      </TitleText>
      <WindowButtons>
        <Minimize />
        <Restore />
        <Close />
      </WindowButtons>
    </TitleBar>
    <MenuBar>
      {MENU.map((m) => (
        <Text key={m} $ls={-0.4} $color={m === "Profile" ? "#8b8c92" : undefined}>{m}</Text>
      ))}
    </MenuBar>
    <PreviewArea>
      <PreviewFrame>
        <Scaler>
          {depth < TEXT_DEPTH ? <ObsDesktop depth={depth + 1} /> : <FarCopy depth={depth + 1} />}
        </Scaler>
      </PreviewFrame>
    </PreviewArea>
    <SourceBar>
      <SourceName>
        <Text>No source selected</Text>
      </SourceName>
      <SourceButton $width={135} $gap={3}>
        <Cog />
        <Text $color="#9b9ca1">Properties</Text>
      </SourceButton>
      <SourceButton $width={102} $gap={2}>
        <FilterIcon />
        <Text $color="#9b9ca1">Filters</Text>
      </SourceButton>
    </SourceBar>
    <Docks>
      <Dock $width={373}>
        <DockTitle>Scenes</DockTitle>
        <DockBody $pad="5px 5px 7px 4px">
          <SceneRow>
            <Text>Scene</Text>
          </SceneRow>
          <DockFooter>
            <Gap $w={3} />
            <ToolButton $mr={6}><Plus /></ToolButton>
            <ToolButton><Trash /></ToolButton>
            <Separator />
            <ToolButton><FilterIcon /></ToolButton>
            <Separator />
            <ToolButton $mr={5}><Chevron up /></ToolButton>
            <ToolButton><Chevron /></ToolButton>
          </DockFooter>
        </DockBody>
      </Dock>
      <Dock $width={505}>
        <DockTitle>Audio Mixer</DockTitle>
        <DockBody $pad="5px 8px 7px 7.5px">
          <MixerChannel name="Desktop Audio" />
          <MixerChannel name="Mic/Aux" live />
          <DockFooter>
            <Gap $w={2} />
            <ToolButton><Cogs /></ToolButton>
            <Separator />
            <ToolButton><Dots /></ToolButton>
          </DockFooter>
        </DockBody>
      </Dock>
      <Dock $width={375}>
        <DockTitle>Sources</DockTitle>
        <DockBody $pad="7px 22px 7px 8px">
          <SourceRow>
            <Gap $w={7} />
            <Monitor />
            <Gap $w={10} />
            <Text>Display Capture</Text>
            <Gap $w={131} />
            <Eye />
            <Gap $w={17} />
            <Lock />
          </SourceRow>
          <DockFooter>
            <ToolButton $mr={6}><Plus /></ToolButton>
            <ToolButton $dark><Trash /></ToolButton>
            <Separator />
            <ToolButton $dark><Cog /></ToolButton>
            <Separator />
            <ToolButton $dark $mr={5}><Chevron up /></ToolButton>
            <ToolButton $dark><Chevron /></ToolButton>
          </DockFooter>
        </DockBody>
      </Dock>
      <Dock $width={379}>
        <DockTitle>Controls</DockTitle>
        <DockBody $pad="6px 6px 0 6px">
          <ControlRow>
            <ControlButton $h={48}><Text>Start Streaming</Text></ControlButton>
          </ControlRow>
          <ControlRow>
            <ControlButton $h={48.5} $active><Text>Stop Recording</Text></ControlButton>
          </ControlRow>
          <ControlRow>
            <ControlButton $h={37.5} $w={324}><Text>Start Virtual Camera</Text></ControlButton>
            <ControlButton $h={37.5} $w={38}><Cog /></ControlButton>
          </ControlRow>
          <ControlRow>
            <ControlButton $h={38}><Text>Studio Mode</Text></ControlButton>
          </ControlRow>
          <ControlRow>
            <ControlButton $h={38}><Text>Settings</Text></ControlButton>
          </ControlRow>
          <ControlRow>
            <ControlButton $h={38}><Text>Exit</Text></ControlButton>
          </ControlRow>
        </DockBody>
      </Dock>
      <Dock $width={290}>
        <DockTitle>Scene Transitions</DockTitle>
        <DockBody $pad="8px 0 0 0">
          <Combo>
            <ComboPart $w={245} $pl={12}><Text>Fade</Text></ComboPart>
            <ComboPart $w={30} $pl={7}><Chevron /></ComboPart>
          </Combo>
          <DurationRow>
            <Text>Duration</Text>
            <SpinBox>
              <Text>300 ms</Text>
              <Gap $w={112} />
              <svg width="14" height="24" viewBox="0 0 14 24" fill="none" stroke="#bbb" strokeWidth="2">
                <path d="M1 7l6-6 6 6M1 17l6 6 6-6" />
              </svg>
            </SpinBox>
          </DurationRow>
          <TransitionTools>
            <ToolButton $w={40.5} $h={33}><Plus /></ToolButton>
            <ToolButton $w={40.5} $h={33} $dark><Trash /></ToolButton>
            <ToolButton $w={40.5} $h={33} $dark><Dots /></ToolButton>
          </TransitionTools>
        </DockBody>
      </Dock>
    </Docks>
    <StatusBar>
      <StatusCell $w={52} $pl={15}><Signal /></StatusCell>
      <StatusCell $w={126} $pl={16} $gap={9}>
        <Broadcast />
        <Text $color="#8d8e94" $ls={-0.45}>00:00:00</Text>
      </StatusCell>
      <StatusCell $w={125} $pl={16} $gap={9}>
        <RecordDot />
        <Text $ls={-0.45}>00:00:00</Text>
      </StatusCell>
      <StatusCell $w={109} $pl={16}><Text $ls={-0.4}>CPU: 1.8%</Text></StatusCell>
      <StatusCell $w={147} $pl={16}><Text>30.00 / 30.00 FPS</Text></StatusCell>
    </StatusBar>
    <Taskbar>
      <WeatherSlot><Weather /></WeatherSlot>
      <AppSlot><WinLogo /></AppSlot>
      <SearchPill>
        <SearchGlass />
        <SearchLabel $color="#55575c" $size={16.5} $ls={0}>Search</SearchLabel>
        <Flower />
      </SearchPill>
      <AppStrip>
        {APPS.map((Icon, i) => (
          <AppSlot key={i} $active={i === APPS.length - 1}>
            <Icon />
          </AppSlot>
        ))}
      </AppStrip>
      <Tray>
        {TrayIcons.up}
        {TrayIcons.mic}
        <TrayStack $align="center">
          <Text $color={dark} $size={15} $ls={-0.3}>ENG</Text>
          <Text $color={dark} $size={15} $ls={-0.3}>IN</Text>
        </TrayStack>
        {TrayIcons.wifi}
        {TrayIcons.speaker}
        {TrayIcons.battery}
        <TrayStack $align="flex-end">
          <Text $color={dark} $size={15.500} $ls={-0.3}>15:44</Text>
          <Text $color={dark} $size={15.500} $ls={-0.3}>14-04-2024</Text>
        </TrayStack>
        <span />
        {TrayIcons.bell}
        {TrayIcons.copilot}
      </Tray>
    </Taskbar>
  </Desktop>
);

/* ---------- player ---------- */

const PlayerTop = () => (
  <TopChrome>
    <VideoTitle>Socket demo workflow video</VideoTitle>
    <svg width="34" height="34" viewBox="0 0 34 34">
      <circle cx="17" cy="17" r="17" fill="#e9e9e9" />
      <path d="M15.500 7.500V18l9 5.500" fill="none" stroke="#111215" strokeWidth="3.200" />
    </svg>
    <Gap $w={26} />
    <svg width="34" height="28" viewBox="0 0 34 28">
      <path d="M20.500 0L34 13.500 20.500 27v-8C11 19 5 21 0 28 2 17 8 9 20.500 7.500z" fill="#e9e9e9" />
    </svg>
  </TopChrome>
);

const PlayerBottom = () => (
  <BottomChrome>
    <Progress>
      <Played />
      <Buffered />
    </Progress>
    <Controls>
      <svg width="23" height="27" viewBox="0 0 23 27"><path d="M0 0l23 13.500L0 27z" fill="#fff" /></svg>
      <svg width="22" height="21" viewBox="0 0 22 21"><path d="M0 0l15 10.500L0 21zM18 0h4v21h-4z" fill="#eee" /></svg>
      <svg width="25" height="24" viewBox="8 9.230 18 17.540" preserveAspectRatio="none">
        <path
          d="M8,21 L12,21 L17,26 L17,10 L12,15 L8,15 L8,21 Z M19,14 L19,22 C20.480,21.320 21.500,19.770 21.500,18 C21.500,16.260 20.480,14.740 19,14 Z M19,11.290 C21.890,12.150 24,14.830 24,18 C24,21.170 21.890,23.850 19,24.710 L19,26.770 C23.010,25.860 26,22.280 26,18 C26,13.720 23.010,10.140 19,9.230 L19,11.290 Z"
          fill="#f4f4f4"
        />
      </svg>
      <Time>0:00 / 0:41</Time>
      <ExpandHint>
        <svg width="12" height="7" viewBox="0 0 12 7"><path d="M.5.5L6 6 11.500.5" fill="none" stroke="#fff" strokeWidth="2" /></svg>
      </ExpandHint>
      <RightControls>
        <svg width="46" height="28" viewBox="0 0 46 28">
          <rect x="12" y="5" width="34" height="18" rx="9" fill="#b4b4b4" />
          <circle cx="14" cy="14" r="13.700" fill="#767676" />
          <path d="M9.500 8h3.200v12H9.500zM15.500 8h3.200v12h-3.200z" fill="#fff" />
        </svg>
        <Gap $w={28} />
        <svg width="29" height="23" viewBox="0 0 29 23">
          <rect width="29" height="23" rx="3" fill="#b9babc" />
          <path d="M4 12.500h5M11.500 12.500h13M4 18h13M19.500 18h5" stroke="#6d6e70" strokeWidth="2.400" />
        </svg>
        <Gap $w={33} />
        <svg width="27" height="27" viewBox="10 10 16 16"><path d={GEAR} fill="#fff" fillRule="evenodd" /></svg>
        <Gap $w={34} />
        <svg width="26" height="26" viewBox="10 10 16 16" fill="#f4f4f4">
          <path d="M14 14h-4v2h6v-6h-2zM22 14v-4h-2v6h6v-2zM20 26h2v-4h4v-2h-6zM10 22h4v4h2v-6h-6z" />
        </svg>
      </RightControls>
    </Controls>
  </BottomChrome>
);

export default function App() {
  return (
    <>
      <GlobalStyle />
      <Player>
        <ObsDesktop depth={0} />
        <TopShade />
        <BottomShade />
        <Overlay>
          <PlayerTop />
          <PlayerBottom />
        </Overlay>
      </Player>
    </>
  );
}
